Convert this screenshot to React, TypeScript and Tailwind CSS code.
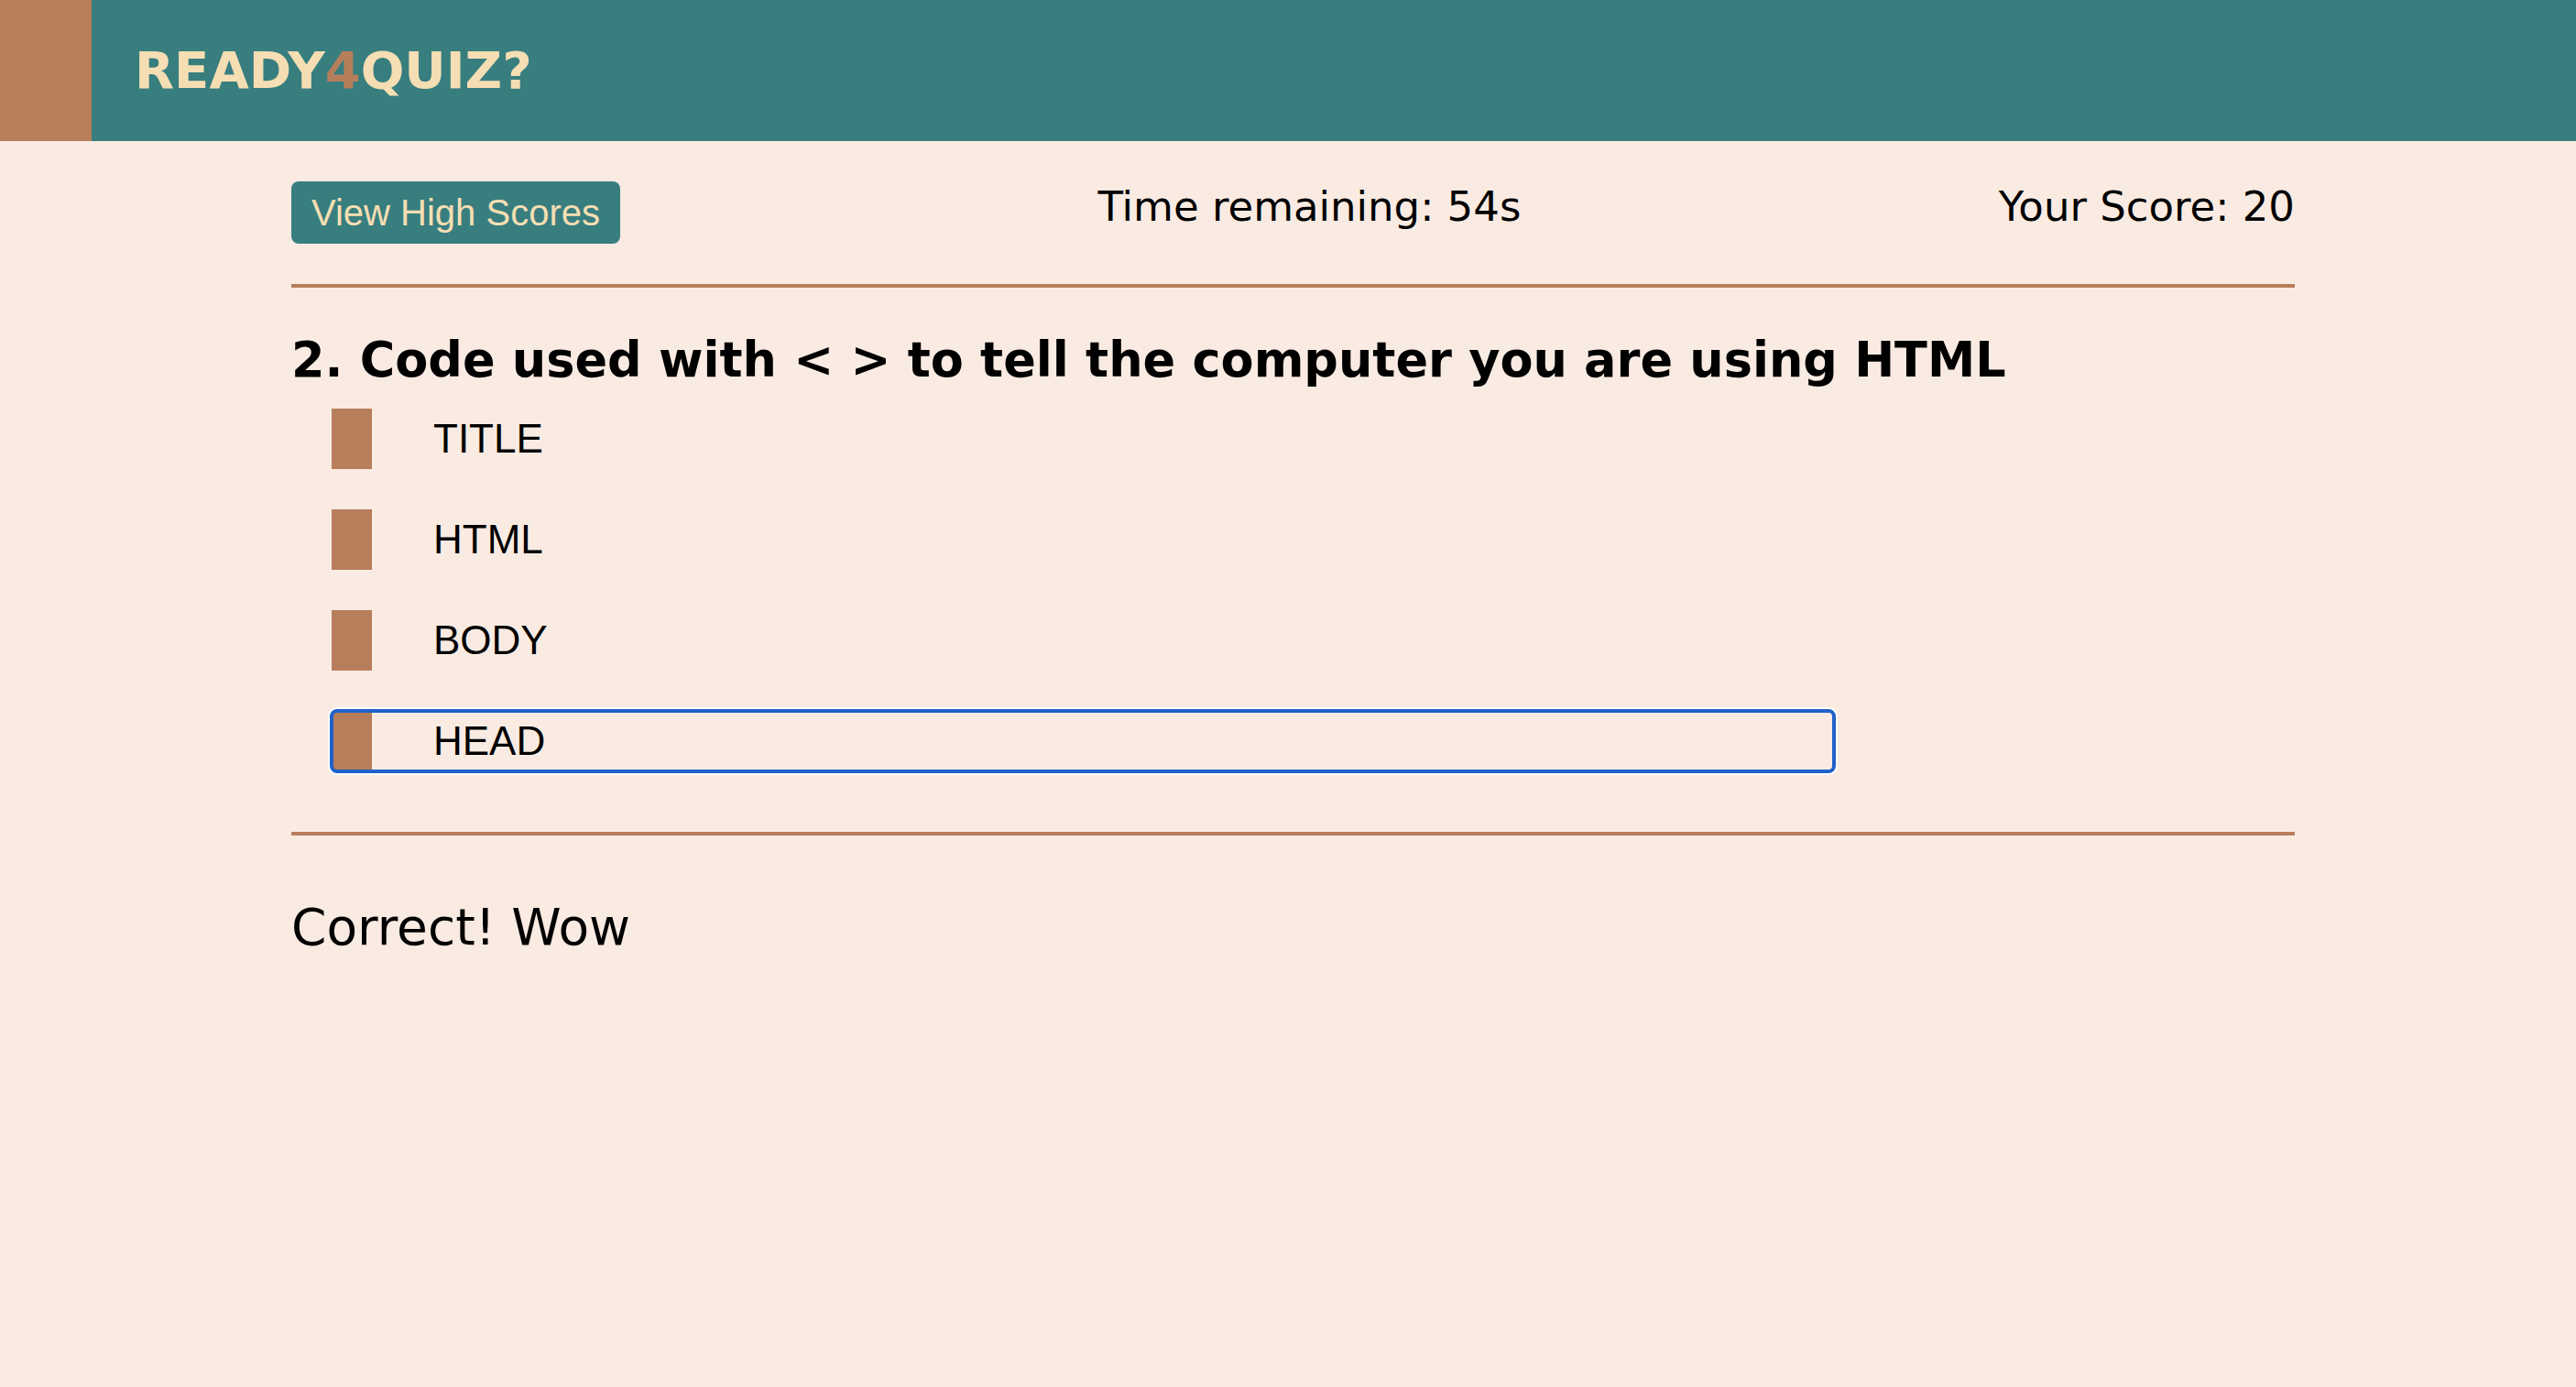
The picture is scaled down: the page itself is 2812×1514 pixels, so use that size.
import { useState } from "react";

interface Choice {
  id: string;
  label: string;
}

const choices: Choice[] = [
  { id: "a", label: "TITLE" },
  { id: "b", label: "HTML" },
  { id: "c", label: "BODY" },
  { id: "d", label: "HEAD" },
];

const App = () => {
  const [picked, setPicked] = useState("d");

  return (
    <div className="min-h-screen w-full bg-[#f9ebe2] font-['DejaVu_Sans',sans-serif] text-black">
      <header className="flex h-[154px] items-center bg-[#387e7f]">
        <div className="h-full w-[100px] bg-[#b77e5c]" />
        <h1 className="ml-[47px] text-[56px] font-bold leading-none text-[#f5deb3]">
          READY<span className="text-[#b77e5c]">4</span>QUIZ?
        </h1>
      </header>

      <main className="ml-[318px] w-[2187px]">
        <div className="mt-[44px] flex items-center justify-between">
          <button className="h-[68px] rounded-[8px] bg-[#387e7f] px-[22px] font-['Liberation_Sans',Arial,sans-serif] text-[40px] leading-none text-[#f5deb3]">
            View High Scores
          </button>
          <p className="mb-[14px] text-[45px] leading-none">Time remaining: 54s</p>
          <p className="mb-[14px] text-[45px] leading-none">Your Score: 20</p>
        </div>

        <div className="mt-[44px] h-[4px] bg-[#b77e5c]" />

        <h2 className="mt-[53px] text-[52.5px] font-bold leading-none">
          2. Code used with &lt; &gt; to tell the computer you are using HTML
        </h2>

        <div className="mt-[26px] ml-[44px] flex w-[75%] flex-col gap-[44px]">
          {choices.map((choice) => (
            <button
              key={choice.id}
              onClick={() => setPicked(choice.id)}
              className={
                choice.id === picked
                  ? "flex h-[66px] items-center rounded-[6px] border-l-[44px] border-[#b77e5c] pl-[67px] text-left font-['Liberation_Sans',Arial,sans-serif] text-[44px] leading-none shadow-[0_0_0_4px_#ffffff] outline-[4px] -outline-offset-2 outline-[#1f62c9] outline-solid"
                  : "flex h-[66px] items-center border-l-[44px] border-[#b77e5c] pl-[67px] text-left font-['Liberation_Sans',Arial,sans-serif] text-[44px] leading-none"
              }
            >
              {choice.label}
            </button>
          ))}
        </div>

        <div className="mt-[66px] h-[4px] bg-[#b77e5c]" />

        <p className="mt-[73px] text-[55px] leading-none">Correct! Wow</p>
      </main>
    </div>
  );
};

export default App;
